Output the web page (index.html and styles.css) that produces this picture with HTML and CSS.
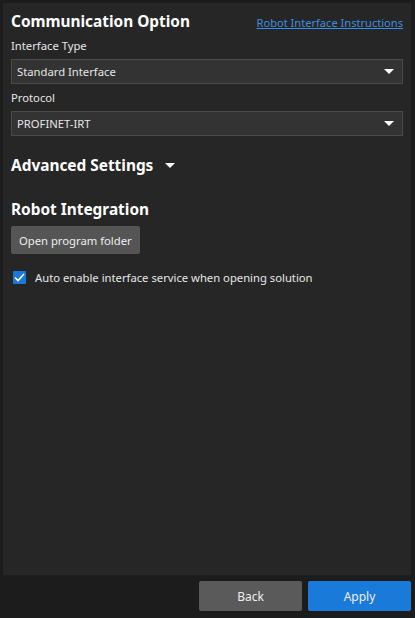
FILE: index.html
```html
<!DOCTYPE html>
<html lang="en">
<head>
  <meta charset="UTF-8" />
  <title>Communication Option</title>
  <link rel="stylesheet" href="styles.css">
</head>
<body>

  <div class="panel">
    <div class="title-row">
      <h2>Communication Option</h2>
      <a href="#" class="link">Robot Interface Instructions</a>
    </div>

    <label class="field-label">Interface Type</label>
    <div class="select">
      <span>Standard Interface</span>
      <span class="caret"></span>
    </div>

    <label class="field-label">Protocol</label>
    <div class="select">
      <span>PROFINET-IRT</span>
      <span class="caret"></span>
    </div>

    <h2 class="section">Advanced Settings <span class="caret big"></span></h2>

    <h2 class="section second">Robot Integration</h2>
    <button class="btn">Open program folder</button>

    <div class="check-row">
      <span class="checkbox">
        <svg width="11" height="9" viewBox="0 0 11 9"><path d="M1 4.5 L4 7.5 L10 1" fill="none" stroke="#fff" stroke-width="1.6"/></svg>
      </span>
      <span>Auto enable interface service when opening solution</span>
    </div>
  </div>

  <div class="footer">
    <button class="btn-footer">Back</button>
    <button class="btn-footer primary">Apply</button>
  </div>

</body>
</html>
```

FILE: styles.css
```css
body {
  margin: 0;
  background: #1c1c1c;
  color: #e6e6e6;
  font-family: "Noto Sans", "Open Sans", sans-serif;
  font-size: 11.25px;
}

.panel {
  margin: 3px 4px 0 3px;
  height: 572px;
  box-sizing: border-box;
  background: #262626;
  padding: 8px 8px;
}

.title-row {
  display: flex;
  justify-content: space-between;
  align-items: baseline;
}

h2 {
  margin: 0;
  font-size: 15.4px;
  line-height: 22px;
  font-weight: bold;
  color: #fff;
}

.link {
  color: #3a8ee0;
  text-decoration: underline;
  font-size: 11.1px;
}

.field-label {
  display: block;
  margin: 5px 0 4px;
  height: 18px;
  line-height: 18px;
}

.title-row + .field-label {
  margin-top: 4px;
}

.select {
  display: flex;
  justify-content: space-between;
  align-items: center;
  height: 25px;
  box-sizing: border-box;
  background: #333;
  border: 1px solid #4a4a4a;
  padding: 0 8px 0 5px;
  margin-bottom: 1px;
}

.caret {
  width: 0;
  height: 0;
  border-left: 5px solid transparent;
  border-right: 5px solid transparent;
  border-top: 5px solid #fff;
}

.caret.big {
  display: inline-block;
  margin-left: 8px;
  vertical-align: 3px;
}

.section {
  margin-top: 19px;
}

.section.second {
  margin-top: 22px;
}

.btn {
  margin-top: 5px;
  background: #555;
  color: #eee;
  border: none;
  border-radius: 2px;
  height: 28px;
  padding: 0 8px;
  font: inherit;
}

.check-row {
  display: flex;
  align-items: center;
  gap: 9px;
  height: 18px;
  margin-top: 14px;
  padding-left: 2px;
}

.checkbox {
  width: 13px;
  height: 13px;
  background: #1a78d8;
  border-radius: 1px;
  display: flex;
  align-items: center;
  justify-content: center;
}

.footer {
  display: flex;
  justify-content: flex-end;
  gap: 6px;
  padding: 6px 4px 0;
}

.btn-footer {
  width: 103px;
  height: 30px;
  border: none;
  border-radius: 2px;
  background: #5a5a5a;
  color: #eee;
  font: inherit;
  font-size: 12px;
}

.btn-footer.primary {
  background: #1a7ad9;
}
```
